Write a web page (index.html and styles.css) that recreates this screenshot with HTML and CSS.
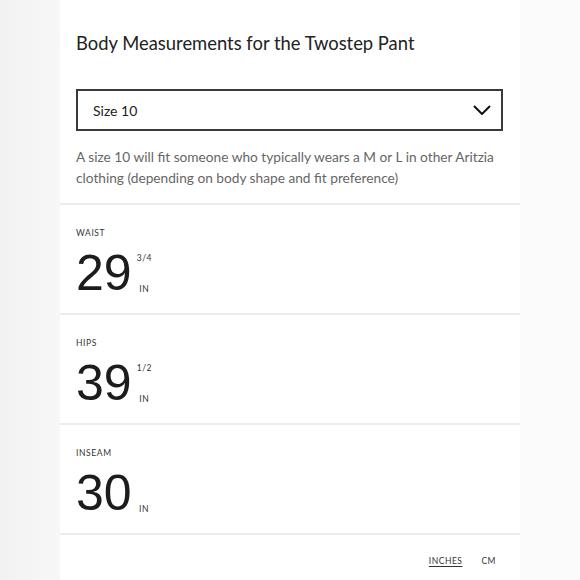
FILE: index.html
```html
<!DOCTYPE html>
<html lang="en">
<head>
<meta charset="utf-8">
<title>Body Measurements</title>
<link rel="stylesheet" href="styles.css">
</head>
<body>
<div class="panel">
  <header class="intro">
    <h1 class="title">Body Measurements for the Twostep Pant</h1>
    <div class="select">
      <span class="select-value">Size 10</span>
      <svg class="chevron" width="18" height="10" viewBox="0 0 18 10" aria-hidden="true">
        <path d="M1 1 L9 9 L17 1" fill="none" stroke="#111" stroke-width="2"/>
      </svg>
    </div>
    <p class="desc">A size 10 will fit someone who typically wears a M or L in other Aritzia clothing (depending on body shape and fit preference)</p>
  </header>

  <section class="measure">
    <div class="label">WAIST</div>
    <div class="value-row">
      <span class="num">29</span>
      <span class="side"><span class="frac">3/4</span><span class="unit">IN</span></span>
    </div>
  </section>

  <section class="measure">
    <div class="label">HIPS</div>
    <div class="value-row">
      <span class="num">39</span>
      <span class="side"><span class="frac">1/2</span><span class="unit">IN</span></span>
    </div>
  </section>

  <section class="measure">
    <div class="label">INSEAM</div>
    <div class="value-row">
      <span class="num">30</span>
      <span class="side"><span class="frac"></span><span class="unit">IN</span></span>
    </div>
  </section>

  <footer class="units">
    <span class="unit-link active">INCHES</span>
    <span class="unit-link">CM</span>
  </footer>
</div>
</body>
</html>
```

FILE: styles.css
```css
* { box-sizing: border-box; }

html, body {
  margin: 0;
  height: 100%;
}

body {
  background: linear-gradient(to right, #f2f2f2 0, #f7f7f7 60px, #fbfbfb 520px, #fbfbfb 100%);
  font-family: "Lato", "Liberation Sans", sans-serif;
  color: #222;
}

.panel {
  width: 460px;
  margin-left: 60px;
  min-height: 100%;
  background: #fff;
}

.intro {
  padding: 31px 15px 15px 16px;
}

.title {
  margin: 0;
  font-size: 18.4px;
  line-height: 24px;
  font-weight: 400;
  color: #222;
}

.select {
  margin-top: 34px;
  width: 427px;
  height: 42px;
  border: 2px solid #3a3a3a;
  display: flex;
  align-items: center;
  justify-content: space-between;
  padding: 0 10px 0 15px;
}

.select-value {
  font-size: 14px;
  color: #222;
}

.chevron { display: block; }

.desc {
  margin: 15px 0 0;
  font-size: 13.7px;
  line-height: 21px;
  color: #666;
}

.measure {
  border-top: 2px solid #ececec;
  padding: 22px 16px 15px;
  height: 110px;
}

.label {
  font-size: 8.5px;
  line-height: 12px;
  letter-spacing: 0.6px;
  color: #333;
}

.value-row {
  margin-top: 9px;
  display: flex;
  align-items: stretch;
  gap: 5px;
}

.num {
  font-family: "Liberation Sans", Arial, sans-serif;
  font-size: 50px;
  line-height: 50px;
  color: #1c1c1c;
}

.side {
  display: flex;
  flex-direction: column;
  align-items: center;
  justify-content: space-between;
  padding: 5px 0 3px;
  font-size: 8.5px;
  line-height: 11px;
  letter-spacing: 0.6px;
  color: #333;
  min-width: 15px;
}

.units {
  border-top: 2px solid #ececec;
  display: flex;
  justify-content: flex-end;
  gap: 19px;
  padding: 20px 24px 0 0;
}

.unit-link {
  font-size: 8.5px;
  line-height: 12px;
  letter-spacing: 0.5px;
  color: #333;
}

.unit-link.active {
  text-decoration: underline;
  text-underline-offset: 2px;
}
```
